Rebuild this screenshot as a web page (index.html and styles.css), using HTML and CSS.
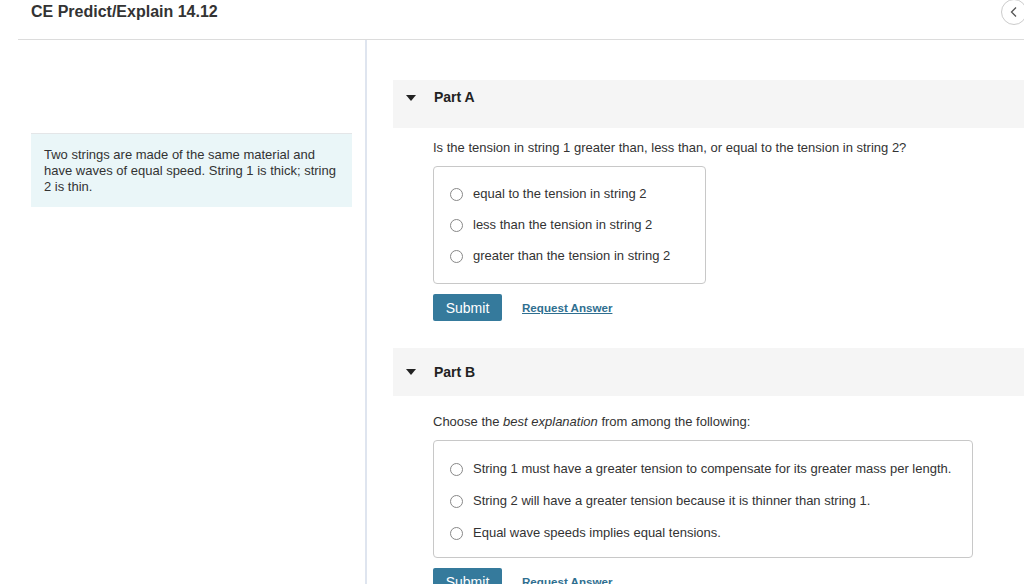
FILE: index.html
```html
<!DOCTYPE html>
<html lang="en">

<head>
    <meta charset="UTF-8">
    <meta name="viewport" content="width=device-width, initial-scale=1.0">
    <title>CE Predict/Explain 14.12</title>
    <link rel="stylesheet" href="styles.css">
</head>

<body>
    <!-- header -->
    <div class="top">
        <h1 class="title">CE Predict/Explain 14.12</h1>
        <div class="back">
            <svg width="12" height="12" viewBox="0 0 12 12"><path d="M8 1.5 L3.5 6 L8 10.5" fill="none" stroke="#555" stroke-width="1.3"/></svg>
        </div>
    </div>

    <div class="main">
        <!-- problem statement -->
        <div class="side">
            <div class="intro">Two strings are made of the same material and have waves of equal speed. String 1 is thick; string 2 is thin.</div>
        </div>

        <!-- parts -->
        <div class="parts">
            <div class="part">
                <div class="part-head first"><span class="arrow"></span><h2>Part A</h2></div>
                <div class="part-body">
                    <p class="question">Is the tension in string 1 greater than, less than, or equal to the tension in string 2?</p>
                    <div class="options small">
                        <label class="opt"><span class="radio"></span>equal to the tension in string 2</label>
                        <label class="opt"><span class="radio"></span>less than the tension in string 2</label>
                        <label class="opt"><span class="radio"></span>greater than the tension in string 2</label>
                    </div>
                    <div class="actions">
                        <button class="submit">Submit</button>
                        <a class="request" href="#">Request Answer</a>
                    </div>
                </div>
            </div>

            <div class="part">
                <div class="part-head"><span class="arrow"></span><h2>Part B</h2></div>
                <div class="part-body second">
                    <p class="question">Choose the <i>best explanation</i> from among the following:</p>
                    <div class="options wide">
                        <label class="opt"><span class="radio"></span>String 1 must have a greater tension to compensate for its greater mass per length.</label>
                        <label class="opt"><span class="radio"></span>String 2 will have a greater tension because it is thinner than string 1.</label>
                        <label class="opt"><span class="radio"></span>Equal wave speeds implies equal tensions.</label>
                    </div>
                    <div class="actions">
                        <button class="submit">Submit</button>
                        <a class="request" href="#">Request Answer</a>
                    </div>
                </div>
            </div>
        </div>
    </div>
</body>

</html>
```

FILE: styles.css
```css
:root {
    --text: #333;
    --line: #dcdcdc;
    --blue: #357a9c;
}

* {
    margin: 0;
    padding: 0;
    box-sizing: border-box;
}

body {
    font-family: "Liberation Sans", Arial, sans-serif;
    color: var(--text);
    background: #fff;
    overflow: hidden;
    height: 584px;
}

/* header */
.top {
    display: flex;
    justify-content: space-between;
    align-items: flex-start;
    margin-left: 18px;
    height: 40px;
    border-bottom: 1px solid var(--line);
}

.title {
    font-size: 16px;
    font-weight: bold;
    padding: 3px 0 0 13px;
    line-height: 18px;
}

.back {
    width: 26px;
    height: 26px;
    margin-top: -1px;
    margin-right: -3px;
    border: 1px solid #ccc;
    border-radius: 50%;
    display: flex;
    align-items: center;
    justify-content: center;
}

/* columns */
.main {
    display: flex;
    margin-left: 18px;
    height: 544px;
}

.side {
    width: 349px;
    padding: 93px 13px 0 13px;
    border-right: 2px solid #dfe5ef;
}

.intro {
    background: #eaf6f8;
    border-top: 1px solid #e4e6e8;
    font-size: 13px;
    line-height: 16px;
    padding: 13px 13px 12px 13px;
}

.parts {
    flex: 1;
    padding: 40px 0 0 26px;
}

.part-head {
    display: flex;
    align-items: center;
    height: 48px;
    background: #f5f5f5;
    padding-left: 13px;
}

.part-head.first {
    align-items: flex-start;
    padding-top: 9px;
}

.part-head.first .arrow {
    margin-top: 6px;
}

.arrow {
    width: 0;
    height: 0;
    border-left: 5px solid transparent;
    border-right: 5px solid transparent;
    border-top: 6px solid #222;
    margin-right: 18px;
}

.part-head h2 {
    font-size: 14px;
    line-height: 17px;
    font-weight: bold;
    color: #222;
}

.part-body {
    padding: 12px 0 27px 40px;
}

.part-body.second {
    padding-top: 18px;
}

.question {
    font-size: 13px;
    line-height: 16px;
}

.options {
    margin-top: 10px;
    border: 1px solid #c8c8c8;
    border-radius: 4px;
    padding: 19px 0 20px 16px;
    height: 118px;
    display: flex;
    flex-direction: column;
    gap: 15px;
}

.small {
    width: 273px;
}

.wide {
    width: 540px;
    padding-top: 20px;
    gap: 16px;
}

.opt {
    display: flex;
    align-items: center;
    font-size: 13px;
    line-height: 16px;
}

.radio {
    width: 13px;
    height: 13px;
    border: 1px solid #888;
    border-radius: 50%;
    margin-right: 10px;
    background: #fff;
}

.actions {
    display: flex;
    align-items: center;
    margin-top: 10px;
    gap: 20px;
}

.submit {
    font-family: inherit;
    background: var(--blue);
    color: #fff;
    border: none;
    border-radius: 2px;
    width: 69px;
    height: 27px;
    font-size: 14px;
}

.request {
    color: #2f6f90;
    font-size: 11.6px;
    font-weight: bold;
    text-decoration: underline;
}
```
